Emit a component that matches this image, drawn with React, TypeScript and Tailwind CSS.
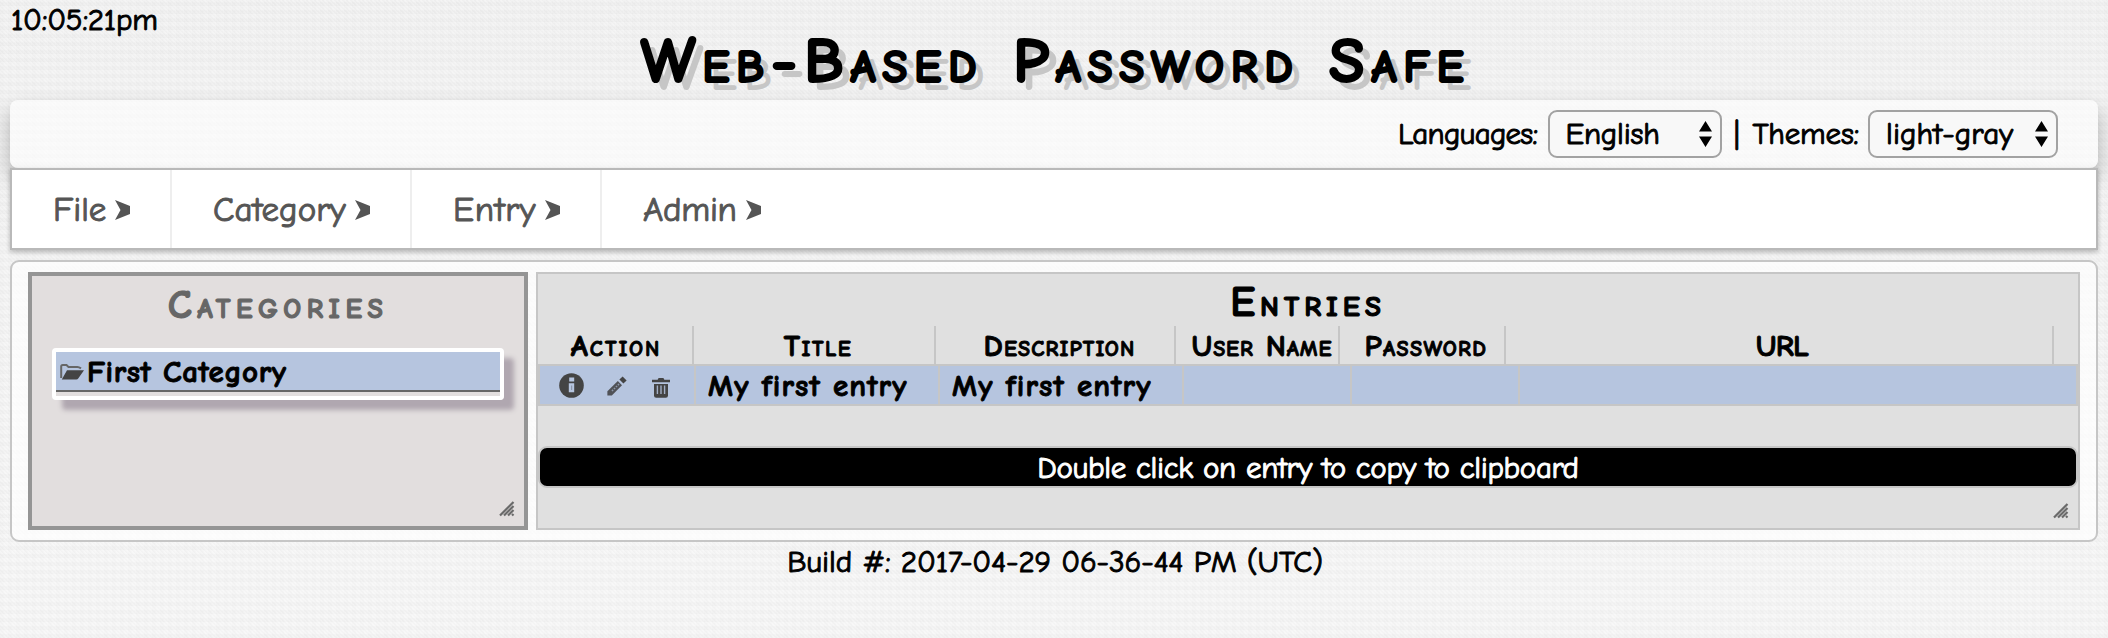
import React from 'react';

const stroke = '[-webkit-text-stroke:1px_currentColor]';
const boldStroke = '[-webkit-text-stroke:0.9px_currentColor]';
const grain =
  'bg-[#f8f8f8] bg-[image:repeating-linear-gradient(0deg,rgba(0,0,0,0.014)_0px,rgba(0,0,0,0.014)_4px,transparent_4px,transparent_8px),repeating-linear-gradient(90deg,rgba(0,0,0,0.006)_0px,rgba(0,0,0,0.006)_4px,transparent_4px,transparent_8px),repeating-linear-gradient(45deg,rgba(0,0,0,0.014)_0px,rgba(0,0,0,0.014)_1.414px,transparent_1.414px,transparent_2.828px),linear-gradient(rgba(0,0,0,0.015),transparent)]';

function MenuArrow() {
  return (
    <svg width="15" height="20" viewBox="0 0 15 20" className="mt-[-2px] ml-[9px] shrink-0" fill="#555">
      <path d="M0 0 15 6V14L0 20 5.5 10Z" />
    </svg>
  );
}

function MenuItem({ label, className }: { label: string; className: string }) {
  return (
    <div className={`flex items-center border-[#eee] pt-[3px] pl-[41px] ${className}`}>
      <span>{label}</span>
      <MenuArrow />
    </div>
  );
}

function Select({ value, className }: { value: string; className: string }) {
  return (
    <div
      className={`flex h-[48px] items-center justify-between rounded-[9px] border-2 border-[#a2a2a2] bg-[#f8f8f8] pr-[8px] ${className}`}
    >
      <span>{value}</span>
      <svg width="13" height="26" viewBox="0 0 13 26">
        <path d="M6.5 0 13 10.5H0ZM0 15.5H13L6.5 26Z" />
      </svg>
    </div>
  );
}

function Grip() {
  return (
    <svg width="16" height="16" viewBox="0 0 16 16" className="absolute right-[9px] bottom-[9px]">
      <path d="M1 14.5 14.5 1M5 14.5 14.5 5M9 14.5 14.5 9M13 14.5l1.5-1.5" stroke="#6a6a6a" strokeWidth="2.2" fill="none" />
    </svg>
  );
}

function FolderIcon() {
  return (
    <svg width="24" height="16" viewBox="0 0 24 16" className="shrink-0">
      <path d="M1.2 14V2.5Q1.2 1 2.7 1H6.5L8.5 3H17.5Q19 3 21 4.4" fill="none" stroke="#666" strokeWidth="2" />
      <path d="M7 6.2H24L18.4 14.2Q17.6 15.5 16.2 15.5H1.8Z" fill="#444" />
    </svg>
  );
}

function InfoIcon() {
  return (
    <svg width="25" height="25" viewBox="0 0 25 25">
      <circle cx="12.5" cy="12.5" r="12.3" fill="#444" />
      <path d="M10.2 4.6h5v3.8h-5zM9.8 10.2h5.4v9h-5.4z" fill="#b6c5df" />
      <path d="M12 12.5h1.2v4.5h-1.2z" fill="#8d97a9" />
    </svg>
  );
}

function PencilIcon() {
  return (
    <svg width="20" height="20" viewBox="0 0 20 20">
      <path d="M0.4 19.6V15.2L10.8 5 15 9.2 4.8 19.6Z" fill="#505257" />
      <path d="M5 15 12 8" stroke="#8e98aa" strokeWidth="1.6" strokeDasharray="1.5 1.3" />
      <path d="M15.6 0.4 19.6 4.4 16.4 7.6 12.4 3.6Z" fill="#444" />
    </svg>
  );
}

function TrashIcon() {
  return (
    <svg width="18" height="20" viewBox="0 0 18 20">
      <path d="M0 1.8h5.6L6.6 0h4.8l1 1.8H18v2.4H0Z" fill="#444" />
      <path d="M2 6h14v11.5q0 2.3-2.2 2.3H4.2Q2 19.8 2 17.5Z" fill="#444" />
      <path d="M5.4 7.5v8.5M9 7.5v8.5M12.6 7.5v8.5" stroke="#a3b0c7" strokeWidth="1.4" />
    </svg>
  );
}

const columns = [
  { label: 'Action', head: 'w-[156px] pl-[2px] tracking-[2px]', cell: 'w-[156px]' },
  { label: 'Title', head: 'w-[242px] pl-[8px] tracking-[1.5px]', cell: 'w-[244px]', value: 'My first entry' },
  { label: 'Description', head: 'w-[240px] pl-[9px] tracking-[1.1px]', cell: 'w-[244px]', value: 'My first entry' },
  { label: 'User Name', head: 'w-[164px] pl-[10px] tracking-[0.9px]', cell: 'w-[168px]' },
  { label: 'Password', head: 'w-[166px] pl-[8px] tracking-[1.4px]', cell: 'w-[168px]' },
  { label: 'URL', head: 'w-[548px] pl-[6px] tracking-[-0.7px]', cell: 'flex-1' },
];

export default function App() {
  return (
    <div
      className={`h-[638px] w-[2108px] overflow-hidden px-[10px] text-[31px] text-black ${grain} [font-family:'Comic_Neue',Lato,sans-serif]`}
    >
      <div className={`h-[26px] pl-px leading-[41px] tracking-[-0.2px] ${stroke}`}>10:05:21pm</div>
      <h1 className="h-[74px] pl-[3px] text-center text-[65px] leading-[71px] font-bold tracking-[6.6px] [font-variant:small-caps] [text-shadow:8px_8px_0_#c6c6c6] [-webkit-text-stroke:2px_black]">
        Web-Based Password Safe
      </h1>

      <div className={`flex h-[68px] items-center justify-end rounded-[8px] bg-white/60 pr-[40px] shadow-[0_10px_20px_rgba(0,0,0,0.28)] ${stroke}`}>
        <span className="mr-[11px] tracking-[-0.75px]">Languages:</span>
        <Select value="English" className="w-[174px] pl-[15px] tracking-[-0.2px]" />
        <span className="mr-[9px] ml-[8px] w-[13px] text-center">|</span>
        <span className="mr-[9px] tracking-[-0.2px]">Themes:</span>
        <Select value="light-gray" className="w-[190px] pl-[16px] tracking-[0.1px]" />
      </div>

      <nav className={`relative flex h-[82px] border-2 border-[#b9b9b9] bg-white text-[35px] text-[#555] shadow-[0_2px_5px_rgba(0,0,0,0.25)] ${stroke}`}>
        <MenuItem label="File" className="w-[160px] border-r-2" />
        <MenuItem label="Category" className="w-[240px] border-r-2" />
        <MenuItem label="Entry" className="w-[190px] border-r-2 tracking-[0.6px]" />
        <MenuItem label="Admin" className="tracking-[-0.3px]" />
      </nav>

      <main className="mt-[10px] flex h-[282px] gap-[8px] rounded-[9px] border-2 border-[#c6c6c6] bg-white/70 px-[16px] py-[10px]">
        <section className="relative h-[258px] w-[500px] border-4 border-[#959595] bg-[#e2dede] px-[20px]">
          <h2 className="h-[72px] text-center text-[40px] leading-[59px] font-bold tracking-[5.5px] text-[#666] [font-variant:small-caps] [-webkit-text-stroke:1.2px_#666]">
            Categories
          </h2>
          <div className="h-[52px] rounded-[4px] border-4 border-white shadow-[10px_10px_5px_#b0a7b0]">
            <div className="flex h-[40px] items-center border-b-2 border-[#666] bg-[#b6c5df] pt-[2px] pl-[4px]">
              <FolderIcon />
              <span className={`ml-[3px] font-bold tracking-[0.6px] ${boldStroke}`}>First Category</span>
            </div>
          </div>
          <Grip />
        </section>

        <section className="relative h-[258px] w-[1544px] border-2 border-[#c6c6c6] bg-[#e0e0e0]">
          <h2 className="h-[52px] text-center text-[42px] leading-[58px] font-bold tracking-[5px] [font-variant:small-caps] [-webkit-text-stroke:1.2px_black]">
            Entries
          </h2>
          <div className={`flex h-[38px] font-bold [font-variant:small-caps] ${boldStroke}`}>
            {columns.map((c) => (
              <div key={c.label} className={`flex items-center justify-center border-r-2 border-[#c6c6c6] pt-[2px] whitespace-nowrap ${c.head}`}>
                {c.label}
              </div>
            ))}
          </div>
          <div className={`flex h-[42px] border-2 border-[#c6c6c6] bg-[#b6c5df] font-bold tracking-[1.15px] ${boldStroke}`}>
            {columns.map((c, i) => (
              <div key={c.label} className={`flex items-center ${i < 5 ? 'border-r-2 border-[#c6c6c6]' : ''} ${c.cell}`}>
                {i === 0 ? (
                  <div className="flex w-full items-center pl-[19px]">
                    <InfoIcon />
                    <span className="mt-[2px] ml-[23px]"><PencilIcon /></span>
                    <span className="mt-[5px] ml-[25px]"><TrashIcon /></span>
                  </div>
                ) : (
                  <span className="pt-[2px] pl-[12px] whitespace-nowrap">{c.value}</span>
                )}
              </div>
            ))}
          </div>
          <div className={`mt-[40px] flex h-[42px] items-center justify-center rounded-[9px] border-2 border-[#c6c6c6] bg-black pt-[2px] tracking-[-0.33px] text-white ${stroke}`}>
            Double click on entry to copy to clipboard
          </div>
          <Grip />
        </section>
      </main>

      <footer className={`pl-[2px] text-center leading-[41px] tracking-[-0.1px] ${stroke}`}>Build #: 2017-04-29 06-36-44 PM (UTC)</footer>
    </div>
  );
}
